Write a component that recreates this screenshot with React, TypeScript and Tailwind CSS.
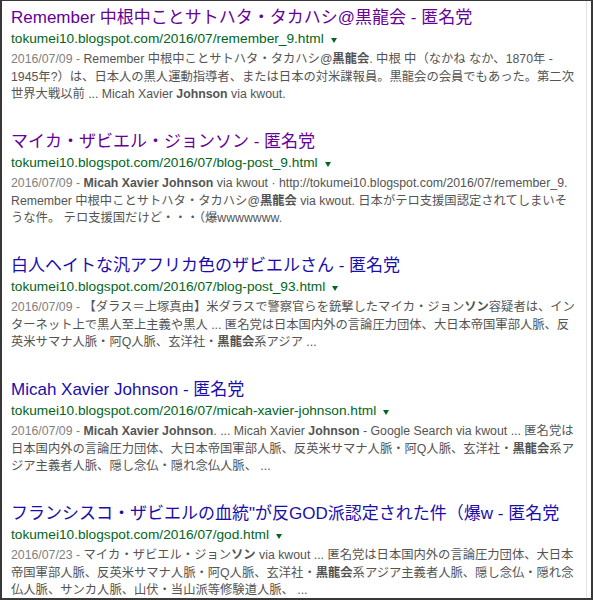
import type { ReactNode } from 'react';

interface Result {
  title: string;
  visited: boolean;
  url: string;
  date: string;
  lines: string[];
}

const results: Result[] = [
  {
    title: 'Remember 中根中ことサトハタ・タカハシ@黒龍会 - 匿名党',
    visited: true,
    url: 'tokumei10.blogspot.com/2016/07/remember_9.html',
    date: '2016/07/09',
    lines: [
      'Remember 中根中ことサトハタ・タカハシ@**黒龍会**. 中根 中（なかね なか、1870年 -',
      '1945年?）は、日本人の黒人運動指導者、または日本の対米諜報員。黒龍会の会員でもあった。第二次',
      '世界大戦以前 ... Micah Xavier **Johnson** via kwout.',
    ],
  },
  {
    title: 'マイカ・ザビエル・ジョンソン - 匿名党',
    visited: true,
    url: 'tokumei10.blogspot.com/2016/07/blog-post_9.html',
    date: '2016/07/09',
    lines: [
      '**Micah Xavier Johnson** via kwout · http://tokumei10.blogspot.com/2016/07/remember_9.',
      'Remember 中根中ことサトハタ・タカハシ@**黒龍会** via kwout. 日本がテロ支援国認定されてしまいそ',
      'うな件。 テロ支援国だけど・・・（爆wwwwwww.',
    ],
  },
  {
    title: '白人ヘイトな汎アフリカ色のザビエルさん - 匿名党',
    visited: false,
    url: 'tokumei10.blogspot.com/2016/07/blog-post_93.html',
    date: '2016/07/09',
    lines: [
      '【ダラス＝上塚真由】米ダラスで警察官らを銃撃したマイカ・ジョン**ソン**容疑者は、イン',
      'ターネット上で黒人至上主義や黒人 ... 匿名党は日本国内外の言論圧力団体、大日本帝国軍部人脈、反',
      '英米サマナ人脈・阿Q人脈、玄洋社・**黒龍会**系アジア ...',
    ],
  },
  {
    title: 'Micah Xavier Johnson - 匿名党',
    visited: false,
    url: 'tokumei10.blogspot.com/2016/07/micah-xavier-johnson.html',
    date: '2016/07/09',
    lines: [
      '**Micah Xavier Johnson**. ... Micah Xavier **Johnson** - Google Search via kwout ... 匿名党は',
      '日本国内外の言論圧力団体、大日本帝国軍部人脈、反英米サマナ人脈・阿Q人脈、玄洋社・**黒龍会**系ア',
      'ジア主義者人脈、隠し念仏・隠れ念仏人脈、 ...',
    ],
  },
  {
    title: 'フランシスコ・ザビエルの血統"が反GOD派認定された件（爆w - 匿名党',
    visited: false,
    url: 'tokumei10.blogspot.com/2016/07/god.html',
    date: '2016/07/23',
    lines: [
      'マイカ・ザビエル・ジョン**ソン** via kwout ... 匿名党は日本国内外の言論圧力団体、大日本',
      '帝国軍部人脈、反英米サマナ人脈・阿Q人脈、玄洋社・**黒龍会**系アジア主義者人脈、隠し念仏・隠れ念',
      '仏人脈、サンカ人脈、山伏・当山派等修験道人脈、 ...',
    ],
  },
];

// "**x**" marks the highlighted query terms
function Rich({ text }: { text: string }) {
  const parts = text.split('**');
  return (
    <>
      {parts.map((p, i): ReactNode =>
        i % 2 ? (
          <b key={i} className="font-bold">
            {p}
          </b>
        ) : (
          <span key={i}>{p}</span>
        ),
      )}
    </>
  );
}

function ResultItem({ r }: { r: Result }) {
  return (
    <div className="mb-[27.5px]">
      <div
        className={`whitespace-nowrap text-[17px] leading-[22px] ${r.visited ? 'text-[#660099]' : 'text-[#1a0dab]'}`}
      >
        {r.title}
      </div>
      <div className="flex h-[20px] items-center whitespace-nowrap text-[13.7px] leading-[20px] text-[#006621]">
        <span>{r.url}</span>
        <span className="ml-[7px] mt-[2px] h-0 w-0 border-x-[3.5px] border-t-[5px] border-x-transparent border-t-[#006621]" />
      </div>
      <div className="mt-[2px] whitespace-nowrap text-[12.3px] leading-[17.5px] text-[#545454]">
        {r.lines.map((line, i) => (
          <div key={i}>
            {i === 0 && <span className="text-[#808080]">{r.date} - </span>}
            <Rich text={line} />
          </div>
        ))}
      </div>
    </div>
  );
}

export default function App() {
  return (
    <div
      className="h-[600px] w-[593px] overflow-hidden border-x-2 border-t border-b-2 border-[#383838] bg-white"
      style={{ fontFamily: '"Liberation Sans", "Noto Sans CJK JP", sans-serif' }}
    >
      <div className="h-full w-[585px] border-r border-[#e4e4e4] pl-[9px] pt-[6px]">
        {results.map((r) => (
          <ResultItem key={r.url} r={r} />
        ))}
      </div>
    </div>
  );
}
